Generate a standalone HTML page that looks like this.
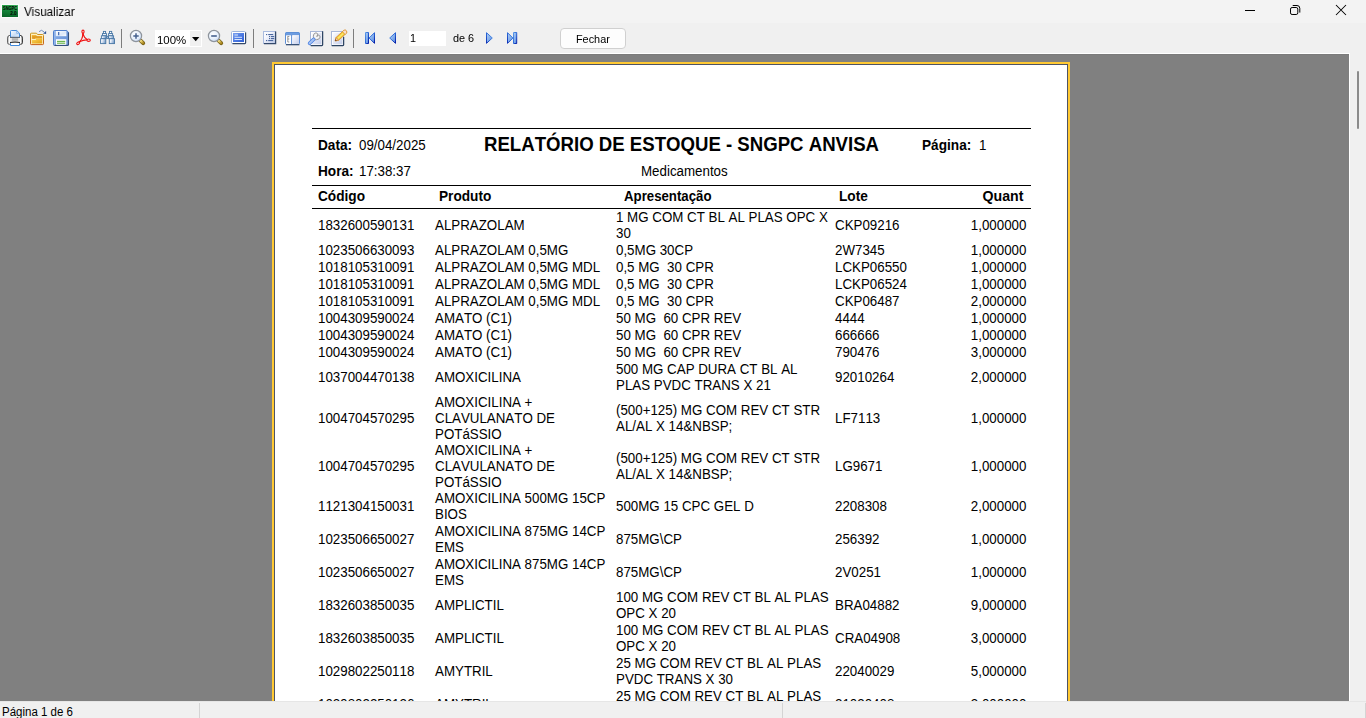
<!DOCTYPE html>
<html lang="pt-BR">
<head>
<meta charset="utf-8">
<title>Visualizar</title>
<style>
*{box-sizing:border-box;margin:0;padding:0}
html,body{width:1366px;height:718px;overflow:hidden;background:#f0f0f0}
body{position:relative;font-family:"Liberation Sans",sans-serif;color:#000;font-size:12px}
.abs{position:absolute}
#titlebar{position:absolute;left:0;top:0;width:1366px;height:23px;background:#f3f3f3}
#title{position:absolute;left:24px;top:4px;font-size:12.5px;line-height:16px;color:#000;transform:scaleX(.94);transform-origin:0 50%;will-change:transform}
#toolbar{position:absolute;left:0;top:23px;width:1366px;height:31px;background:#f0f0f0;border-bottom:1px solid #fff}
#work{position:absolute;left:0;top:54px;width:1349px;height:647px;background:#808080;overflow:hidden;box-shadow:inset 0 1px 0 #7b7b7b}
#vscroll{position:absolute;left:1349px;top:53px;width:17px;height:648px;background:#f0f0f0;border-left:1px solid #fff}
#thumb{position:absolute;left:7px;top:18px;width:2px;height:58px;background:#8b8b8b;border-radius:1px}
#status{position:absolute;left:0;top:701px;width:1366px;height:17px;background:#f0f0f0;border-top:1px solid #e6e6e6}
#status .sep{position:absolute;top:1px;width:1px;height:16px;background:#d4d4d4}
#status .t{position:absolute;left:2px;top:3px;font-size:12px;line-height:15px;transform:scaleX(.958);transform-origin:0 50%}
#page{position:absolute;left:272px;top:8px;width:798px;height:1130px;background:#ffc933}
#page .in{position:absolute;left:2px;top:2px;right:2px;bottom:2px;background:#fff;border:1px solid #4d5364}
#rep{position:absolute;left:-272px;top:-62px;width:1366px;height:718px;font-size:14px;line-height:16px;white-space:nowrap;font-kerning:none}
.hl{position:absolute;left:312px;width:719px;height:1px;background:#000}
.b{font-weight:bold}
.tx.b{transform:scaleX(.975)}
.r{position:absolute;left:0;width:1366px;height:80px}
.c{position:absolute;top:50%;transform:translateY(-50%) scaleX(.952);transform-origin:0 50%;line-height:16px}
.c1{left:318px}.c2{left:435px}.c3{left:616px}.c4{left:835px}.c5{right:339.6px;text-align:right;transform-origin:100% 50%}
.ui{font-size:12px;line-height:15px;white-space:nowrap;transform-origin:0 50%}
#zoomtxt{left:157px;top:32.500px;font-size:11.500px;transform:scaleX(.995)}
#pgnum{left:409.500px;top:30.500px;font-size:11.500px;transform:scaleX(.94)}
#pgof{left:452.500px;top:30.500px;font-size:11.500px;transform:scaleX(.945)}
#btnclose{left:560px;top:28px;width:66px;height:21px;background:#fdfdfd;border:1px solid #d0d0d0;border-radius:4px;text-align:center}
#btnclose .ui{display:inline-block;margin-top:3px;font-size:11.500px;transform-origin:50% 50%;transform:scaleX(.945)}
.tx{position:absolute;line-height:16px;transform:scaleX(.952);transform-origin:0 50%}
</style>
</head>
<body>
<div id="titlebar"><div id="title">Visualizar</div>
<svg class="abs" style="left:1230px;top:0" width="136" height="24" viewBox="1230 0 136 24" fill="none" stroke="#000" stroke-width="1">
<path d="M1245 10.500h10"/>
<rect x="1290.5" y="7.5" width="7.3" height="7" rx="1.6"/>
<path d="M1292.7 5.5h4.300q2.800 0 2.800 2.800v4.300"/>
<path d="M1336 5l10 10M1346 5l-10 10" stroke-width="1.050"/>
</svg>
</div>
<div id="toolbar"></div>
<svg id="tbsvg" class="abs" style="left:0;top:0" width="700" height="54" viewBox="0 0 700 54">
<defs>
 <linearGradient id="gPaper" x1="0" y1="0" x2="1" y2="1"><stop offset="0" stop-color="#fff"/><stop offset=".55" stop-color="#c9ddf6"/><stop offset="1" stop-color="#e8f1fc"/></linearGradient>
 <linearGradient id="gPrn" x1="0" y1="0" x2="1" y2="0"><stop offset="0" stop-color="#8a8a8a"/><stop offset=".12" stop-color="#fff"/><stop offset=".3" stop-color="#d4d4d4"/><stop offset=".7" stop-color="#d4d4d4"/><stop offset=".88" stop-color="#fff"/><stop offset="1" stop-color="#6a6a6a"/></linearGradient>
 <linearGradient id="gSlot" x1="0" y1="0" x2="0" y2="1"><stop offset="0" stop-color="#a4a4a4"/><stop offset="1" stop-color="#d0d0d0"/></linearGradient>
 <linearGradient id="gFold" x1="0" y1="0" x2="1" y2="1"><stop offset="0" stop-color="#f9d45c"/><stop offset="1" stop-color="#e5a010"/></linearGradient>
 <linearGradient id="gFoldS" x1="0" y1="0" x2="0" y2="1"><stop offset="0" stop-color="#cc9a1c"/><stop offset="1" stop-color="#c65c14"/></linearGradient>
 <linearGradient id="gSave" x1="0" y1="0" x2="1" y2="0"><stop offset="0" stop-color="#9dbcec"/><stop offset=".2" stop-color="#7ea6e3"/><stop offset="1" stop-color="#6c95d8"/></linearGradient>
 <linearGradient id="gSaveTop" x1="0" y1="0" x2="1" y2="1"><stop offset="0" stop-color="#fff"/><stop offset=".6" stop-color="#dbe7f8"/><stop offset="1" stop-color="#fff"/></linearGradient>
 <linearGradient id="gBino2" x1="0" y1="0" x2="1" y2=".3"><stop offset="0" stop-color="#fff"/><stop offset=".35" stop-color="#eef3fb"/><stop offset="1" stop-color="#7fa2cc"/></linearGradient>
 <linearGradient id="gBino" x1="0" y1="0" x2="1" y2="0"><stop offset="0" stop-color="#7ea0c4"/><stop offset=".45" stop-color="#f4f8fc"/><stop offset="1" stop-color="#5f86ae"/></linearGradient>
 <radialGradient id="gLens" cx=".4" cy=".35" r=".75"><stop offset="0" stop-color="#fff"/><stop offset=".6" stop-color="#e4eefb"/><stop offset="1" stop-color="#b9cdea"/></radialGradient>
 <linearGradient id="gHandle" x1="0" y1="0" x2="1" y2="1"><stop offset="0" stop-color="#f2dc7a"/><stop offset="1" stop-color="#a8841c"/></linearGradient>
 <linearGradient id="gScr" x1="0" y1="0" x2="1" y2="1"><stop offset="0" stop-color="#7ea2f0"/><stop offset=".5" stop-color="#4b79e2"/><stop offset="1" stop-color="#2f5fd6"/></linearGradient>
 <linearGradient id="gPg" x1="0" y1="0" x2="1" y2="1"><stop offset="0" stop-color="#fff"/><stop offset=".35" stop-color="#f4f6fd"/><stop offset="1" stop-color="#bcc8e6"/></linearGradient>
 <linearGradient id="gPg2" x1="0" y1="0" x2="1" y2="1"><stop offset="0" stop-color="#fdfdff"/><stop offset="1" stop-color="#c3cdea"/></linearGradient>
 <linearGradient id="gNavS" x1="0" y1="0" x2="1" y2="1"><stop offset="0" stop-color="#5c9ae8"/><stop offset=".5" stop-color="#2a66d6"/><stop offset="1" stop-color="#0218a4"/></linearGradient>
 <linearGradient id="gNavS2" x1="1" y1="0" x2="0" y2="1"><stop offset="0" stop-color="#6aa4ec"/><stop offset=".5" stop-color="#2f6cd8"/><stop offset="1" stop-color="#0a2cb4"/></linearGradient>
 <linearGradient id="gNavF" x1="0" y1="0" x2="1" y2="1"><stop offset="0" stop-color="#b4d0f4"/><stop offset=".5" stop-color="#86b0ec"/><stop offset="1" stop-color="#4f84de"/></linearGradient>
 <linearGradient id="gNav" x1="0" y1="0" x2="1" y2="1"><stop offset="0" stop-color="#8fbdf5"/><stop offset=".5" stop-color="#3f7fe6"/><stop offset="1" stop-color="#0a2fc0"/></linearGradient>
 <linearGradient id="gNavR" x1="1" y1="0" x2="0" y2="1"><stop offset="0" stop-color="#8fbdf5"/><stop offset=".5" stop-color="#3f7fe6"/><stop offset="1" stop-color="#0a2fc0"/></linearGradient>
 <linearGradient id="gIco" x1="0" y1="0" x2="0" y2="1"><stop offset="0" stop-color="#2aa64a"/><stop offset=".45" stop-color="#15863a"/><stop offset="1" stop-color="#0a6a2a"/></linearGradient>
 <linearGradient id="gIcoH" x1="0" y1="1" x2="1" y2="0"><stop offset="0" stop-color="#064d1c" stop-opacity=".35"/><stop offset=".5" stop-color="#0a6a2a" stop-opacity="0"/><stop offset="1" stop-color="#6fd08a" stop-opacity=".45"/></linearGradient>
 <linearGradient id="gPencil" x1="0" y1="0" x2="1" y2="1"><stop offset="0" stop-color="#fbe27a"/><stop offset="1" stop-color="#e9b820"/></linearGradient>
</defs>
<!-- app icon -->
<rect x="1.500" y="4.500" width="17" height="13" fill="none" stroke="#fff" stroke-opacity=".6"/>
<rect x="2" y="5" width="16" height="12" fill="url(#gIco)"/>
<rect x="2" y="5" width="16" height="12" fill="url(#gIcoH)"/>
<text x="3" y="10" font-family="Liberation Sans, sans-serif" font-weight="bold" font-size="5.2" textLength="14" lengthAdjust="spacingAndGlyphs" fill="#000">SNGPC</text>
<text x="10.200" y="14.700" font-family="Liberation Sans, sans-serif" font-weight="bold" font-size="5.2" textLength="6.5" lengthAdjust="spacingAndGlyphs" fill="#000">2.0</text>
<!-- printer -->
<g>
 <path d="M7.500 38.200q0-2.900 2.900-2.900h9.200q2.900 0 2.900 2.900v4.300q0 1.800-1.800 1.800h-11.400q-1.800 0-1.800-1.800z" fill="url(#gPrn)"/>
 <path d="M10 35.300q-2.500 0-2.500 2.900v4.300q0 1.800 1.800 1.800h1" fill="none" stroke="#5a5a5a" stroke-width=".9"/>
 <path d="M20 35.300q2.500 0 2.500 2.900v4.300q0 1.800-1.800 1.800h-1" fill="none" stroke="#2e2e2e" stroke-width=".9"/>
 <path d="M10.500 37.400V31.300q0-.8.800-.8h5.400l2.800 2.800v4.100z" fill="url(#gPaper)" stroke="#4189da"/>
 <path d="M16.700 30.700v2.600h2.600z" fill="#e6f0fc" stroke="#4189da" stroke-width=".5"/>
 <rect x="10.300" y="37.700" width="9.400" height="4.300" fill="#ececec"/>
 <rect x="11.800" y="38.300" width="6.400" height="3.500" fill="url(#gSlot)"/>
 <path d="M10 37.400h10" stroke="#5a5a5a" stroke-width=".9"/>
 <path d="M10 42.500q5 -.9 10 0" fill="none" stroke="#222" stroke-width="1"/>
 <path d="M10.500 43.200v2.300h9v-2.300" fill="#fff" stroke="#4189da"/>
 <path d="M11 43.300h8v1.700h-8z" fill="#fff"/>
</g>
<!-- open folder -->
<g>
 <path d="M30.5 43.8V34q0-.8.8-.8h5.2l1 1.3h5.2q.8 0 .8.800V43.8q0 .8-.8.8H31.3q-.8 0-.8-.8z" fill="#fdf1c4" stroke="url(#gFoldS)" stroke-width="1"/>
 <path d="M31.800 35h4.300l1 1.300h5.100v2.500h-10.400z" fill="#f1b434"/>
 <path d="M32.300 37h9.700" fill="none" stroke="#dc9622" stroke-width="1.400"/>
 <path d="M32.300 38.200h2.800" fill="none" stroke="#dc9622" stroke-width="1.100"/>
 <path d="M31.800 39.900h3.800l1-1.300h5.600v4.900h-10.400z" fill="url(#gFold)"/>
 <path d="M39 31.700q2.500-2.900 5 .2" fill="none" stroke="#6482b6" stroke-width=".9"/>
 <path d="M46.100 30.900v3.100l-3.100-.6z" fill="#2f5596"/>
</g>
<!-- save -->
<g>
 <path d="M53.500 31.500q0-1 1-1h12.200l1.800 1.800v12.200q0 1-1 1h-13q-1 0-1-1z" fill="url(#gSave)" stroke="#4f7fcc" stroke-width="1"/>
 <path d="M68.500 32.500v12q0 .9-.9.900h-13" fill="none" stroke="#34507c" stroke-width="1.100"/>
 <rect x="55.800" y="31" width="10.600" height="5.200" fill="url(#gSaveTop)"/>
 <rect x="58" y="32" width="1.300" height="3.200" fill="#4a6fb4"/>
 <rect x="56" y="39.200" width="10.300" height="5.600" fill="#fff"/>
 <rect x="57" y="40.800" width="8.200" height="1.200" fill="#6db650"/>
 <rect x="57" y="42.600" width="8.200" height="1.200" fill="#6db650"/>
</g>
<!-- pdf -->
<g fill="none" stroke="#f01414" stroke-width="1.100" stroke-linecap="round">
 <ellipse cx="83" cy="31.700" rx="1.100" ry="1.600"/>
 <path d="M83 33.500v1.500" stroke-width="1.800"/>
 <path d="M83 34.500c-.3 3-2 6-4 7.800"/>
 <path d="M83.200 34.500c.8 2.400 2.300 4.200 3.900 5"/>
 <ellipse cx="88.600" cy="40.200" rx="1.700" ry="1.200"/>
 <ellipse cx="78.200" cy="43.200" rx="1.700" ry="1.100" transform="rotate(-38 78.200 43.200)"/>
 <path d="M79.500 41.800c2.500-1.200 5-1.800 7.400-1.900"/>
</g>
<!-- binoculars -->
<g stroke="#4676a4" stroke-width=".9">
 <rect x="103.400" y="31.400" width="2.200" height="2.200" fill="#fff"/>
 <rect x="109.500" y="31.400" width="2.200" height="2.200" fill="#fff"/>
 <rect x="102.500" y="33.600" width="4" height="2.200" fill="#f2f6fb"/>
 <rect x="108.600" y="33.600" width="4" height="2.200" fill="#f2f6fb"/>
 <rect x="101.400" y="35.800" width="4.800" height="2.900" fill="url(#gBino2)"/>
 <rect x="108.600" y="35.800" width="5" height="2.900" fill="url(#gBino2)"/>
 <circle cx="107.500" cy="37.400" r="1.100" fill="#9bb8d6" stroke="#3a6a9a" stroke-width="1"/>
 <rect x="100.600" y="38.700" width="5.200" height="4.900" fill="url(#gBino2)"/>
 <rect x="109.300" y="38.700" width="5.200" height="4.900" fill="url(#gBino2)"/>
</g>
<!-- separators -->
<rect x="121" y="29" width="1" height="19" fill="#7d7d7d"/>
<rect x="253" y="29" width="1" height="19" fill="#7d7d7d"/>
<rect x="353" y="29" width="1" height="19" fill="#7d7d7d"/>
<!-- zoom in -->
<g>
 <path d="M140.900 40.900l2.300 2.300" stroke="#6e5a14" stroke-width="3.900" stroke-linecap="round"/>
 <path d="M140.900 40.900l2.300 2.300" stroke="url(#gHandle)" stroke-width="2.600" stroke-linecap="round"/>
 <circle cx="136" cy="36" r="5.600" fill="url(#gLens)" stroke="#8e949c" stroke-width="1.200"/>
 <path d="M133.300 36h5.400M136 33.300v5.400" stroke="#44608e" stroke-width="1.500"/>
</g>
<!-- zoom out -->
<g>
 <path d="M218.900 40.900l2.300 2.300" stroke="#6e5a14" stroke-width="3.900" stroke-linecap="round"/>
 <path d="M218.900 40.900l2.300 2.300" stroke="url(#gHandle)" stroke-width="2.600" stroke-linecap="round"/>
 <circle cx="214" cy="36" r="5.600" fill="url(#gLens)" stroke="#8e949c" stroke-width="1.200"/>
 <path d="M211.200 36h5.600" stroke="#44608e" stroke-width="1.600"/>
</g>
<!-- combo -->
<rect x="155" y="30" width="47" height="17" fill="#fff"/>
<rect x="190" y="31" width="11" height="15" fill="#f0f0f0"/>
<path d="M192 37h7.400l-3.700 4.300z" fill="#000"/>
<!-- full screen -->
<g>
 <rect x="231.500" y="31.500" width="14" height="12" rx="1" fill="#fff" stroke="#9fb4dc"/>
 <path d="M245.600 32.500v10.300q0 .8-.8.800h-12.300" fill="none" stroke="#344a6c" stroke-width="1.200"/>
 <rect x="233" y="33" width="11" height="9" fill="url(#gScr)"/>
 <path d="M234.500 35h3.500M234.500 37.300h7.500M234.500 39.500h7.500" stroke="#d9e5fb" stroke-width="1"/>
</g>
<!-- outline -->
<g>
 <rect x="263.500" y="31.500" width="12" height="12" fill="url(#gPg)" stroke="#a9bbdf"/>
 <path d="M275.600 31.500v12.100h-11.600" fill="none" stroke="#344a6c" stroke-width="1.300"/>
 <g fill="#4a68a0"><rect x="266" y="34" width="1.200" height="1.100"/><rect x="268.200" y="34" width="5" height="1.100"/>
 <rect x="269" y="36" width="1.200" height="1.100"/><rect x="271" y="36" width="3.200" height="1.100"/>
 <rect x="269" y="38" width="1.200" height="1.100"/><rect x="271" y="38" width="3.200" height="1.100"/>
 <rect x="266" y="40" width="1.200" height="1.100"/><rect x="268.200" y="40" width="5" height="1.100"/></g>
</g>
<!-- thumbnails -->
<g>
 <rect x="285.500" y="32.500" width="14" height="12" rx="1.200" fill="#fff" stroke="#5d8fd6"/>
 <path d="M285.500 34.800v-1.100q0-1.200 1.200-1.200h11.600q1.200 0 1.200 1.200v1.100z" fill="#6b9ce2" stroke="#5d8fd6"/>
 <rect x="292.500" y="35.300" width="6.500" height="8.700" fill="url(#gPg2)"/>
 <path d="M291.600 35v9" stroke="#5d8fd6" stroke-width="1"/>
 <path d="M287.500 36.500h1.800M287.800 36.500v5.500M287.800 39h1.500M287.800 42h1.500" stroke="#8c8c8c" stroke-width=".9" fill="none"/>
 <path d="M286 44.700h13.400" stroke="#344a6c" stroke-width="1.200"/>
</g>
<!-- page settings -->
<g>
 <rect x="310.5" y="31.5" width="12" height="14" fill="#fff" stroke="#a9b8d8"/>
 <rect x="311.8" y="32.8" width="9.5" height="11.5" fill="url(#gPg2)"/>
 <path d="M322.6 31.2V44.8q0 .8-.8.8H310.8" fill="none" stroke="#2f4664" stroke-width="1.300"/>
 <path d="M313.800 38.200C313 36.500 313.400 33 315.800 32.900C317.600 32.900 318 34.200 317.200 35.400C318.600 34.600 320.200 35.400 320 37.200C319.800 39.400 316.800 39.600 315.300 39.900Z" fill="#f4f4f4" stroke="#8a8a8a" stroke-width=".9" stroke-linejoin="round"/>
 <path d="M316.100 36.900l1.100-1.800 1 1.100z" fill="#8a8a8a"/>
 <path d="M313.700 39.300l-4.100 4" stroke="#4a80e2" stroke-width="3.600" stroke-linecap="round"/>
 <path d="M313.700 39.300l-4.100 4" stroke="#a4c2f4" stroke-width="2" stroke-linecap="round"/>
</g>
<!-- edit page -->
<g>
 <rect x="331.5" y="31.5" width="12" height="14" fill="#fff" stroke="#a9b8d8"/>
 <rect x="332.8" y="32.8" width="9.500" height="11.500" fill="url(#gPg2)"/>
 <path d="M343.600 37v7.800q0 .8-.8.800h-11" fill="none" stroke="#2f4664" stroke-width="1.300"/>
 <path d="M335.2 40.9L336 37.5 343.9 30.3q1.7-.6 2.4.5q.9 1.2.2 2.3L338.6 40.3z" fill="#f3c838" stroke="#d98a24" stroke-width=".8" stroke-linejoin="round"/>
 <path d="M337.8 38.4L343.2 33.5" stroke="#fbea6c" stroke-width="1.300"/>
 <path d="M335.200 40.900L336 37.500 338.600 40.300z" fill="#f8d4b0" stroke="#c47a2a" stroke-width=".6"/>
 <path d="M335.200 40.900l.4-1.600 1.200 1.300z" fill="#4a2606"/>
 <path d="M342.5 31.6l2.6 2.9 1.400-1.400q.7-1.100-.2-2.300-.7-1.100-2.400-.5z" fill="#f9dfcc" stroke="#d98a24" stroke-width=".6"/>
</g>
<!-- first -->
<g stroke="url(#gNavS)" stroke-width="1" stroke-linejoin="round">
 <rect x="365.5" y="32.5" width="3" height="11" fill="url(#gNavF)"/>
 <path d="M369 38l5.5-5.300v10.600z" fill="url(#gNavF)"/>
</g>
<!-- prev -->
<g stroke="url(#gNavS)" stroke-width="1" stroke-linejoin="round">
 <path d="M389.7 38l5.800-5.300v10.600z" fill="url(#gNavF)"/>
</g>
<!-- page edit -->
<rect x="409" y="31" width="37" height="15" fill="#fff"/>
<!-- next -->
<g stroke="url(#gNavS2)" stroke-width="1" stroke-linejoin="round">
 <path d="M492.300 38l-5.800-5.300v10.600z" fill="url(#gNavF)"/>
</g>
<!-- last -->
<g stroke="url(#gNavS2)" stroke-width="1" stroke-linejoin="round">
 <path d="M513 38l-5.5-5.300v10.600z" fill="url(#gNavF)"/>
 <rect x="513.500" y="32.500" width="3.200" height="11" fill="url(#gNavF)" stroke="url(#gNavS)"/>
</g>
</svg>

<div class="abs ui" id="zoomtxt">100%</div>
<div class="abs ui" id="pgnum">1</div>
<div class="abs ui" id="pgof">de 6</div>
<div class="abs" id="btnclose"><span class="ui">Fechar</span></div>
<div id="work">
 <div id="page"><div class="in"></div>
 <div id="rep">
  <div class="hl" style="top:128px"></div>
  <div class="hl" style="top:185px"></div>
  <div class="hl" style="top:208px"></div>
  <div class="tx b" style="left:318px;top:137px">Data:</div>
  <div class="tx" style="left:359px;top:137px">09/04/2025</div>
  <div class="tx b" style="left:318px;top:163px">Hora:</div>
  <div class="tx" style="left:359px;top:163px">17:38:37</div>
  <div class="tx b" id="ttl" style="left:484px;top:133px;font-size:19.6px;line-height:22px;transform:scaleX(.950)">RELATÓRIO DE ESTOQUE - SNGPC ANVISA</div>
  <div class="tx" style="left:641px;top:163px">Medicamentos</div>
  <div class="tx b" style="left:922px;top:137px">Página:</div>
  <div class="tx" style="left:979px;top:137px">1</div>
  <div class="tx b" style="left:318px;top:188px">Código</div>
  <div class="tx b" style="left:439px;top:188px">Produto</div>
  <div class="tx b" style="left:624px;top:188px;transform:scaleX(.945)">Apresentação</div>
  <div class="tx b" style="left:839px;top:188px">Lote</div>
  <div class="tx b" style="right:343px;top:188px;transform-origin:100% 50%;transform:scaleX(1.01)">Quant</div>
<div class="r" style="top:185.4px"><div class="c c1">1832600590131</div><div class="c c2">ALPRAZOLAM</div><div class="c c3">1 MG COM CT BL AL PLAS OPC X<br>30</div><div class="c c4">CKP09216</div><div class="c c5">1,000000</div></div>
<div class="r" style="top:210.4px"><div class="c c1">1023506630093</div><div class="c c2">ALPRAZOLAM 0,5MG</div><div class="c c3">0,5MG 30CP</div><div class="c c4">2W7345</div><div class="c c5">1,000000</div></div>
<div class="r" style="top:227.4px"><div class="c c1">1018105310091</div><div class="c c2">ALPRAZOLAM 0,5MG MDL</div><div class="c c3">0,5 MG&nbsp; 30 CPR</div><div class="c c4">LCKP06550</div><div class="c c5">1,000000</div></div>
<div class="r" style="top:244.4px"><div class="c c1">1018105310091</div><div class="c c2">ALPRAZOLAM 0,5MG MDL</div><div class="c c3">0,5 MG&nbsp; 30 CPR</div><div class="c c4">LCKP06524</div><div class="c c5">1,000000</div></div>
<div class="r" style="top:261.4px"><div class="c c1">1018105310091</div><div class="c c2">ALPRAZOLAM 0,5MG MDL</div><div class="c c3">0,5 MG&nbsp; 30 CPR</div><div class="c c4">CKP06487</div><div class="c c5">2,000000</div></div>
<div class="r" style="top:278.4px"><div class="c c1">1004309590024</div><div class="c c2">AMATO (C1)</div><div class="c c3">50 MG&nbsp; 60 CPR REV</div><div class="c c4">4444</div><div class="c c5">1,000000</div></div>
<div class="r" style="top:295.4px"><div class="c c1">1004309590024</div><div class="c c2">AMATO (C1)</div><div class="c c3">50 MG&nbsp; 60 CPR REV</div><div class="c c4">666666</div><div class="c c5">1,000000</div></div>
<div class="r" style="top:312.4px"><div class="c c1">1004309590024</div><div class="c c2">AMATO (C1)</div><div class="c c3">50 MG&nbsp; 60 CPR REV</div><div class="c c4">790476</div><div class="c c5">3,000000</div></div>
<div class="r" style="top:337.4px"><div class="c c1">1037004470138</div><div class="c c2">AMOXICILINA</div><div class="c c3">500 MG CAP DURA CT BL AL<br>PLAS PVDC TRANS X 21</div><div class="c c4">92010264</div><div class="c c5">2,000000</div></div>
<div class="r" style="top:378.4px"><div class="c c1">1004704570295</div><div class="c c2">AMOXICILINA +<br>CLAVULANATO DE<br>POTáSSIO</div><div class="c c3">(500+125) MG COM REV CT STR<br>AL/AL X 14&amp;NBSP;</div><div class="c c4">LF7113</div><div class="c c5">1,000000</div></div>
<div class="r" style="top:426.4px"><div class="c c1">1004704570295</div><div class="c c2">AMOXICILINA +<br>CLAVULANATO DE<br>POTáSSIO</div><div class="c c3">(500+125) MG COM REV CT STR<br>AL/AL X 14&amp;NBSP;</div><div class="c c4">LG9671</div><div class="c c5">1,000000</div></div>
<div class="r" style="top:466.4px"><div class="c c1">1121304150031</div><div class="c c2">AMOXICILINA 500MG 15CP<br>BIOS</div><div class="c c3">500MG 15 CPC GEL D</div><div class="c c4">2208308</div><div class="c c5">2,000000</div></div>
<div class="r" style="top:499.4px"><div class="c c1">1023506650027</div><div class="c c2">AMOXICILINA 875MG 14CP<br>EMS</div><div class="c c3">875MG\CP</div><div class="c c4">256392</div><div class="c c5">1,000000</div></div>
<div class="r" style="top:532.4px"><div class="c c1">1023506650027</div><div class="c c2">AMOXICILINA 875MG 14CP<br>EMS</div><div class="c c3">875MG\CP</div><div class="c c4">2V0251</div><div class="c c5">1,000000</div></div>
<div class="r" style="top:565.4px"><div class="c c1">1832603850035</div><div class="c c2">AMPLICTIL</div><div class="c c3">100 MG COM REV CT BL AL PLAS<br>OPC X 20</div><div class="c c4">BRA04882</div><div class="c c5">9,000000</div></div>
<div class="r" style="top:598.4px"><div class="c c1">1832603850035</div><div class="c c2">AMPLICTIL</div><div class="c c3">100 MG COM REV CT BL AL PLAS<br>OPC X 20</div><div class="c c4">CRA04908</div><div class="c c5">3,000000</div></div>
<div class="r" style="top:631.4px"><div class="c c1">1029802250118</div><div class="c c2">AMYTRIL</div><div class="c c3">25 MG COM REV CT BL AL PLAS<br>PVDC TRANS X 30</div><div class="c c4">22040029</div><div class="c c5">5,000000</div></div>
<div class="r" style="top:664.4px"><div class="c c1">1029802250126</div><div class="c c2">AMYTRIL</div><div class="c c3">25 MG COM REV CT BL AL PLAS<br>PVDC TRANS X 30</div><div class="c c4">21030408</div><div class="c c5">3,000000</div></div>
 </div>
 </div>
</div>
<div id="vscroll"><div id="thumb"></div></div>
<div id="status"><div class="t">Página 1 de 6</div><div class="sep" style="left:199px"></div><div class="sep" style="left:782px"></div><div class="sep" style="left:1365px"></div></div>
</body>
</html>
